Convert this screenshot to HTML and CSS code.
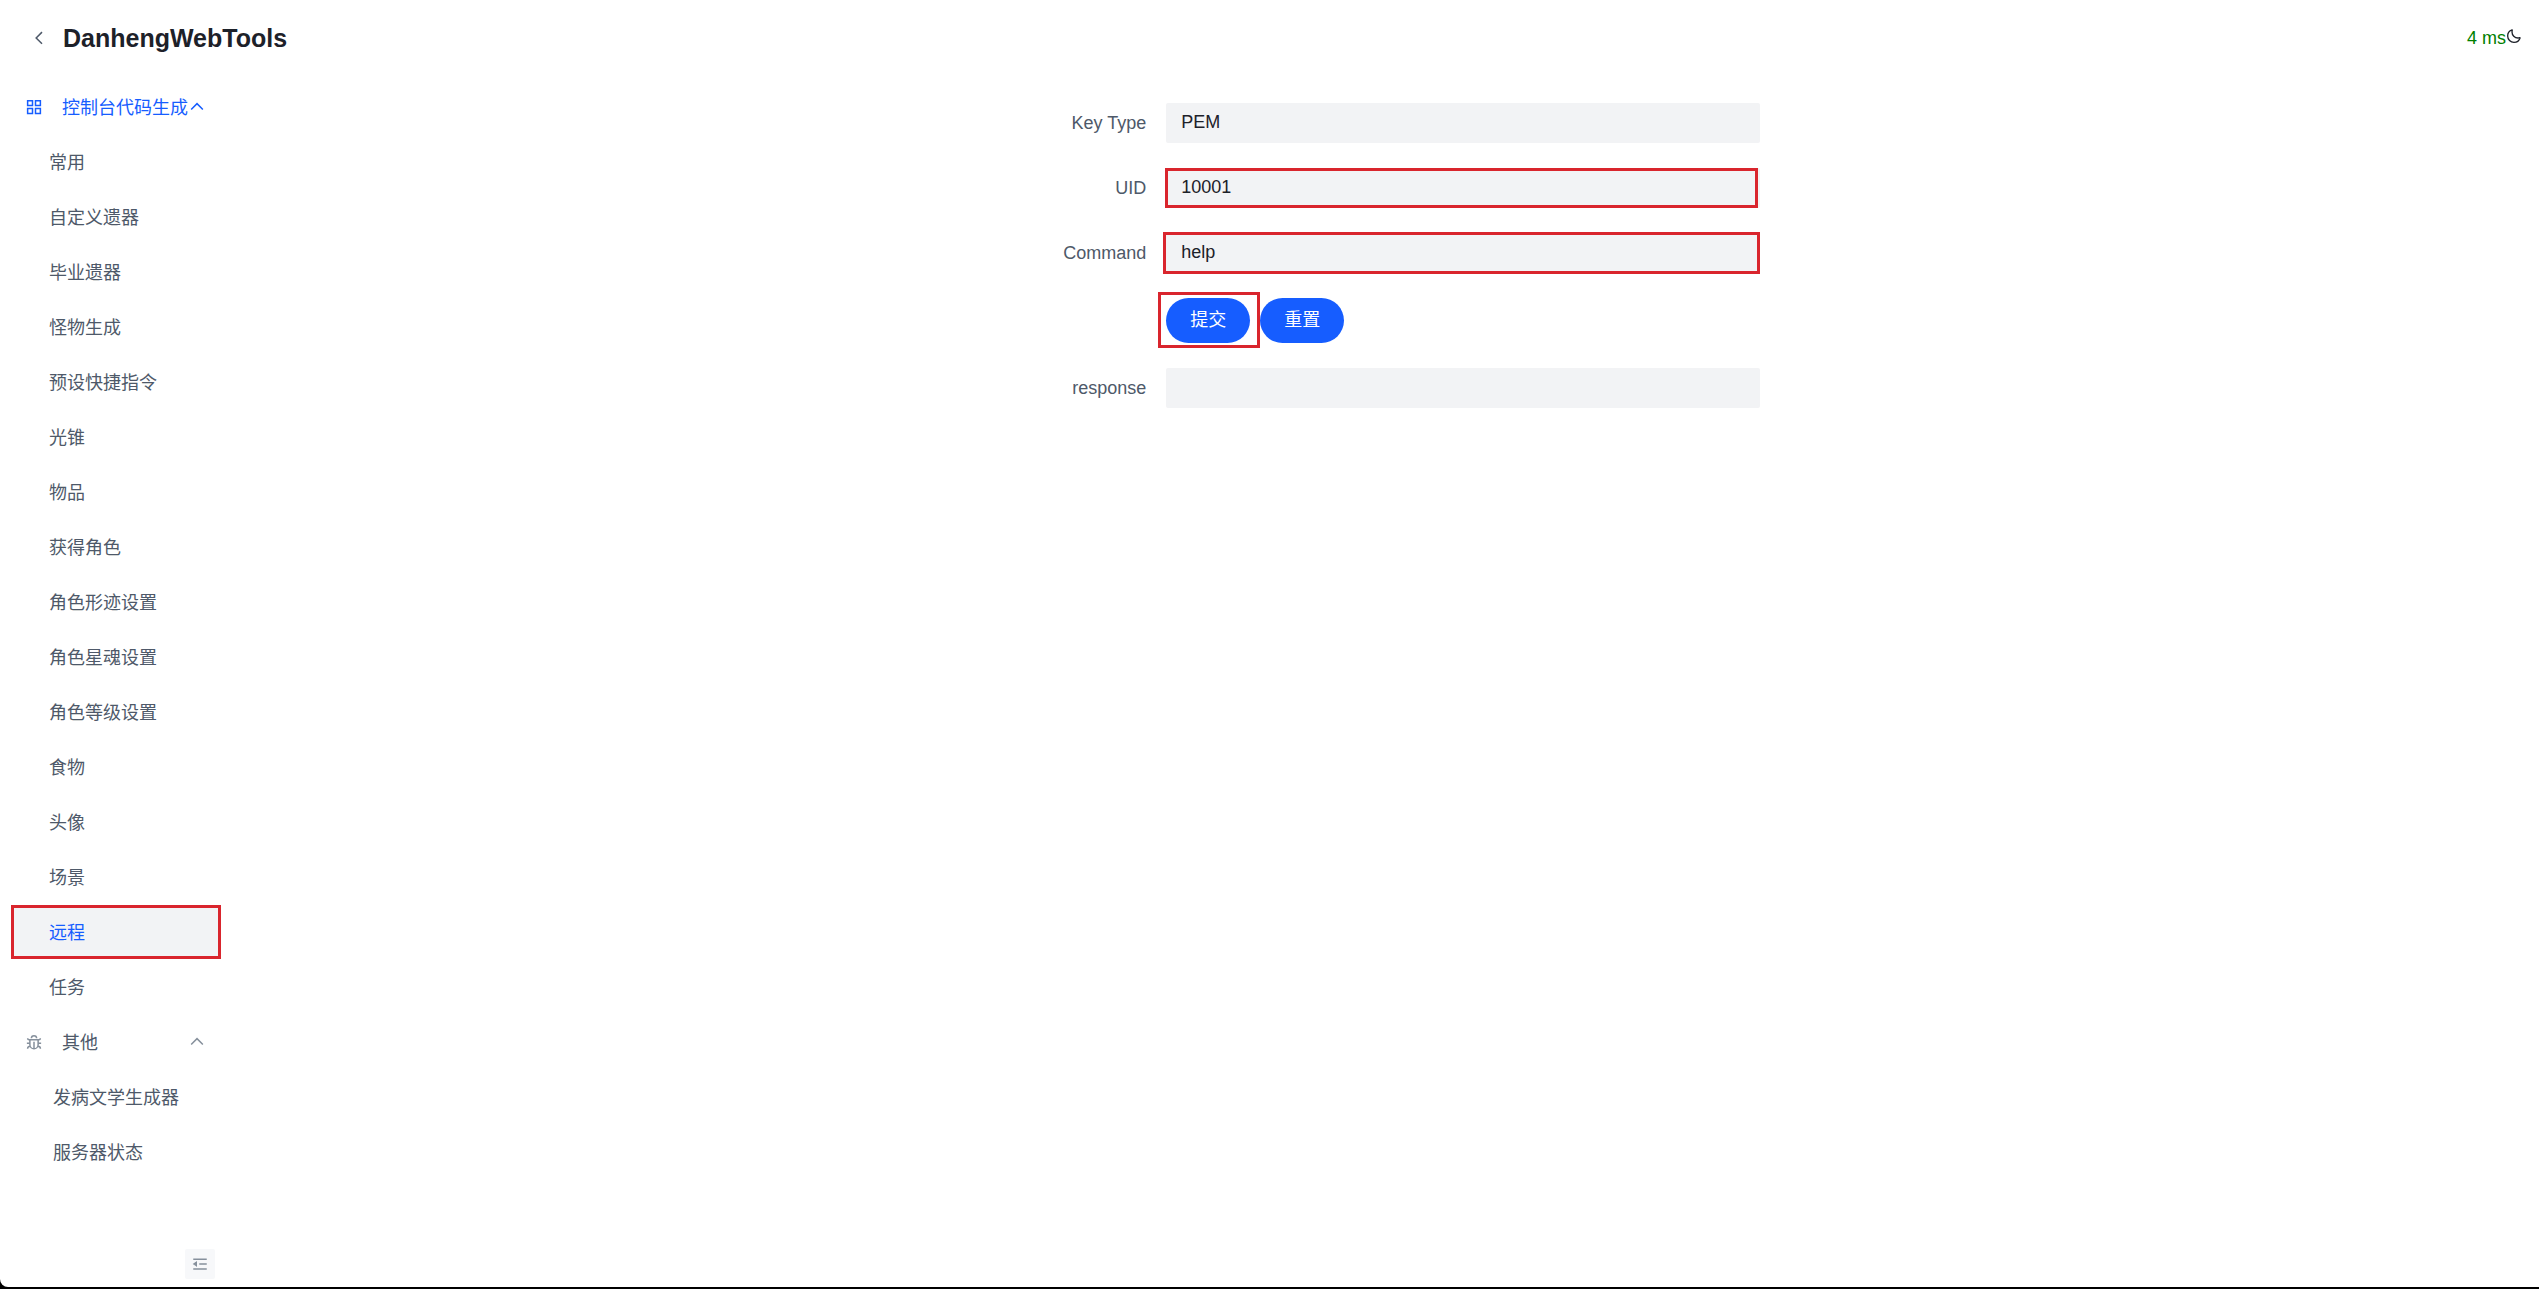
FILE: index.html
```html
<!DOCTYPE html>
<html lang="zh-CN">
<head>
<meta charset="utf-8">
<title>DanhengWebTools</title>
<link rel="stylesheet" href="styles.css">
</head>
<body>
<div class="app">
  <header class="header">
    <button class="back" type="button" aria-label="返回">
      <svg class="icon" viewBox="0 0 48 48"><path d="M32 8.4 16.444 23.956 32 39.513"/></svg>
    </button>
    <h1 class="title">DanhengWebTools</h1>
    <span class="latency">4 ms</span>
    <button class="theme" type="button" aria-label="切换主题">
      <svg class="icon" viewBox="0 0 48 48"><path d="M42.108 29.769c.124-.387-.258-.736-.645-.613A17.99 17.99 0 0 1 36 30c-9.941 0-18-8.059-18-18 0-1.904.296-3.74.844-5.463.123-.387-.226-.768-.613-.645C10.558 8.334 5 15.518 5 24c0 10.493 8.507 19 19 19 8.482 0 15.666-5.558 18.108-13.231Z"/></svg>
    </button>
  </header>
  <div class="body">
    <aside class="sidebar">
      <nav class="menu">
        <button class="group group-open" type="button">
          <svg class="icon" viewBox="0 0 48 48"><path d="M7 7h13v13H7zM28 7h13v13H28zM7 28h13v13H7zM28 28h13v13H28z"/></svg>
          <span class="group-name">控制台代码生成</span>
          <svg class="icon" viewBox="0 0 48 48"><path d="M39.6 30.557 24.043 15 8.487 30.557"/></svg>
        </button>
        <a class="item" href="#">常用</a>
        <a class="item" href="#">自定义遗器</a>
        <a class="item" href="#">毕业遗器</a>
        <a class="item" href="#">怪物生成</a>
        <a class="item" href="#">预设快捷指令</a>
        <a class="item" href="#">光锥</a>
        <a class="item" href="#">物品</a>
        <a class="item" href="#">获得角色</a>
        <a class="item" href="#">角色形迹设置</a>
        <a class="item" href="#">角色星魂设置</a>
        <a class="item" href="#">角色等级设置</a>
        <a class="item" href="#">食物</a>
        <a class="item" href="#">头像</a>
        <a class="item" href="#">场景</a>
        <a class="item item-active" href="#">远程</a>
        <a class="item" href="#">任务</a>
        <button class="group" type="button">
          <svg class="icon" viewBox="0 0 48 48"><path d="M24 42c-6.075 0-11-4.925-11-11V18h22v13c0 6.075-4.925 11-11 11Zm0 0V23m11 4h8M5 27h8M7 14a4 4 0 0 0 4 4h26a4 4 0 0 0 4-4m0 28v-.5a6.5 6.5 0 0 0-6.5-6.5M7 42v-.5a6.5 6.5 0 0 1 6.5-6.5M17 14a7 7 0 1 1 14 0"/></svg>
          <span class="group-name">其他</span>
          <svg class="icon" viewBox="0 0 48 48"><path d="M39.6 30.557 24.043 15 8.487 30.557"/></svg>
        </button>
        <a class="item item-deep" href="#">发病文学生成器</a>
        <a class="item item-deep" href="#">服务器状态</a>
      </nav>
      <button class="collapse" type="button" aria-label="收起菜单">
        <svg class="icon" viewBox="0 0 48 48"><path d="M42 11H6M42 24H22M42 37H6"/><path class="solid" d="m14 28-6-4 6-4Z"/></svg>
      </button>
    </aside>
    <main class="main">
      <form class="form">
        <label class="label" for="key-type">Key Type</label>
        <div class="field"><select class="control" id="key-type"><option>PEM</option></select></div>
        <label class="label" for="uid">UID</label>
        <div class="field mark mark-uid"><input class="control" id="uid" type="text" value="10001"></div>
        <label class="label" for="command">Command</label>
        <div class="field mark mark-command"><input class="control" id="command" type="text" value="help"></div>
        <div class="actions">
          <span class="mark mark-submit"><button class="button" type="button">提交</button></span>
          <button class="button" type="reset">重置</button>
        </div>
        <label class="label" for="response">response</label>
        <div class="field"><input class="control" id="response" type="text" readonly></div>
      </form>
    </main>
  </div>
</div>
</body>
</html>
```
FILE: styles.css
```css
* {
  box-sizing: border-box;
}

html {
  background: #000;
}

body {
  margin: 0;
  color: #1d2129;
  font: 18px/28px "Liberation Sans", "Noto Sans CJK SC", sans-serif;
}

button,
input,
select {
  margin: 0;
  border: 0;
  color: inherit;
  font: inherit;
}

button {
  padding: 0;
  background: none;
  cursor: pointer;
}

.app {
  display: flex;
  flex-direction: column;
  min-height: calc(100vh - 2px);
  background: #fff;
  border-bottom-left-radius: 8px;
}

.icon {
  display: block;
  flex: none;
  width: 18px;
  height: 18px;
  fill: none;
  stroke: currentColor;
  stroke-width: 4;
}

.header {
  display: flex;
  align-items: center;
  height: 75px;
  padding: 0 17px 0 30px;
}

.back {
  margin-right: 15px;
  color: #4e5969;
}

.title {
  flex: 1;
  margin: 0;
  font-size: 25px;
  line-height: 34px;
}

.latency {
  color: #008000;
}

.theme {
  padding-bottom: 4px;
}

.theme .icon {
  width: 16px;
  height: 16px;
}

.body {
  display: flex;
  flex: 1;
}

.sidebar {
  display: flex;
  flex-direction: column;
  justify-content: space-between;
  width: 231px;
  padding: 7px 12px 8px 13px;
}

.menu {
  display: flex;
  flex-direction: column;
  gap: 5px;
}

.item,
.group {
  display: flex;
  align-items: center;
  height: 50px;
  color: #4e5969;
  text-decoration: none;
}

.item {
  padding: 2px 0 0 36px;
}

.item-deep {
  padding-left: 40px;
}

.item-active {
  background: #f2f3f5;
  color: #165dff;
  outline: 3px solid #d9252d;
  outline-offset: -1px;
}

.group {
  padding: 0 13px 0 12px;
  text-align: left;
}

.group-name {
  flex: 1;
  padding: 2px 0 0 19px;
  white-space: nowrap;
}

.group .icon {
  color: #86909c;
}

.group-open,
.group-open .icon {
  color: #165dff;
}

.collapse {
  display: grid;
  place-items: center;
  align-self: flex-end;
  width: 30px;
  height: 30px;
  margin-right: 4px;
  border-radius: 2px;
  background: #f7f8fa;
  color: #86909c;
}

.solid {
  fill: currentColor;
}

.main {
  flex: 1;
  padding-top: 28px;
}

.form {
  display: grid;
  grid-template-columns: 5fr 19fr;
  row-gap: 25px;
  max-width: 750px;
  margin: 0 auto;
}

.label {
  padding-right: 20px;
  color: #4e5969;
  line-height: 40px;
  text-align: right;
}

.control {
  display: block;
  width: 100%;
  height: 40px;
  padding: 0 15px 2px;
  border-radius: 2px;
  background: #f2f3f5;
  appearance: none;
}

.actions {
  display: flex;
  grid-column: 2;
  gap: 10px;
}

.button {
  display: block;
  width: 84px;
  height: 45px;
  padding-bottom: 2px;
  border-radius: 23px;
  background: #165dff;
  color: #fff;
}

.mark {
  position: relative;
}

.mark::after {
  content: "";
  position: absolute;
  border: 3px solid #d9252d;
  pointer-events: none;
}

.mark-uid::after {
  inset: 0 2px 0 -1px;
}

.mark-command::after {
  inset: -1px 0 -1px -3px;
}

.mark-submit::after {
  inset: -6px -10px -5px -8px;
}
```
